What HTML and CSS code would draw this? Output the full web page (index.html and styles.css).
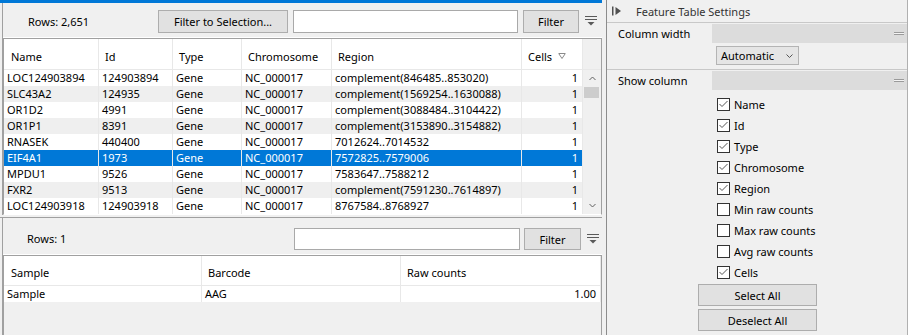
FILE: index.html
```html
<!DOCTYPE html>
<html lang="en">
<head>
    <meta charset="UTF-8">
    <title>Feature Table</title>
    <link rel="stylesheet" href="styles.css">
</head>
<body>
    <div class="app">
        <div class="tables">
            <!-- Feature table -->
            <div class="pane pane-main">
                <div class="pane-body">
                    <div class="toolbar toolbar-main">
                        <div class="rows-label">Rows: 2,651</div>
                        <button class="btn btn-selection">Filter to Selection...</button>
                        <input class="filter-input" type="text">
                        <button class="btn btn-filter">Filter</button>
                        <svg class="filter-menu" width="12" height="11" viewBox="0 0 12 11">
                            <path d="M0 0.5H12M0 3.5H12" stroke="#5a5a5a" stroke-width="1" fill="none"/>
                            <path d="M2.5 6H9.5L6 9.5Z" fill="#5a5a5a"/>
                        </svg>
                    </div>
                    <div class="grid features">
                        <div class="row head">
                            <div class="cell first">Name</div>
                            <div class="cell">Id</div>
                            <div class="cell">Type</div>
                            <div class="cell">Chromosome</div>
                            <div class="cell">Region</div>
                            <div class="cell">Cells
                                <svg class="sort-mark" width="8" height="7" viewBox="0 0 8 7">
                                    <path d="M0.5 0.5H7.5M1 1L4 5.5L7 1" stroke="#8a8a8a" stroke-width="1" fill="none"/>
                                </svg>
                            </div>
                            <div class="cell corner"></div>
                        </div>
                        <div class="vscroll">
                            <div class="arrow">
                                <svg width="7" height="5" viewBox="0 0 7 5"><path d="M0.5 4L3.5 1L6.5 4" stroke="#606060" fill="none"/></svg>
                            </div>
                            <div class="thumb"></div>
                            <div class="track"></div>
                            <div class="arrow">
                                <svg width="7" height="5" viewBox="0 0 7 5"><path d="M0.5 1L3.5 4L6.5 1" stroke="#606060" fill="none"/></svg>
                            </div>
                        </div>
                        <div class="row">
                            <div class="cell">LOC124903894</div><div class="cell">124903894</div><div class="cell">Gene</div>
                            <div class="cell">NC_000017</div><div class="cell">complement(846485..853020)</div><div class="cell num">1</div>
                        </div>
                        <div class="row alt">
                            <div class="cell">SLC43A2</div><div class="cell">124935</div><div class="cell">Gene</div>
                            <div class="cell">NC_000017</div><div class="cell">complement(1569254..1630088)</div><div class="cell num">1</div>
                        </div>
                        <div class="row">
                            <div class="cell">OR1D2</div><div class="cell">4991</div><div class="cell">Gene</div>
                            <div class="cell">NC_000017</div><div class="cell">complement(3088484..3104422)</div><div class="cell num">1</div>
                        </div>
                        <div class="row alt">
                            <div class="cell">OR1P1</div><div class="cell">8391</div><div class="cell">Gene</div>
                            <div class="cell">NC_000017</div><div class="cell">complement(3153890..3154882)</div><div class="cell num">1</div>
                        </div>
                        <div class="row">
                            <div class="cell">RNASEK</div><div class="cell">440400</div><div class="cell">Gene</div>
                            <div class="cell">NC_000017</div><div class="cell">7012624..7014532</div><div class="cell num">1</div>
                        </div>
                        <div class="row selected">
                            <div class="cell">EIF4A1</div><div class="cell">1973</div><div class="cell">Gene</div>
                            <div class="cell">NC_000017</div><div class="cell">7572825..7579006</div><div class="cell num">1</div>
                        </div>
                        <div class="row">
                            <div class="cell">MPDU1</div><div class="cell">9526</div><div class="cell">Gene</div>
                            <div class="cell">NC_000017</div><div class="cell">7583647..7588212</div><div class="cell num">1</div>
                        </div>
                        <div class="row alt">
                            <div class="cell">FXR2</div><div class="cell">9513</div><div class="cell">Gene</div>
                            <div class="cell">NC_000017</div><div class="cell">complement(7591230..7614897)</div><div class="cell num">1</div>
                        </div>
                        <div class="row">
                            <div class="cell">LOC124903918</div><div class="cell">124903918</div><div class="cell">Gene</div>
                            <div class="cell">NC_000017</div><div class="cell">8767584..8768927</div><div class="cell num">1</div>
                        </div>
                    </div>
                </div>
            </div>

            <div class="splitter"></div>

            <!-- Sample table -->
            <div class="pane pane-detail">
                <div class="pane-body">
                    <div class="toolbar toolbar-detail">
                        <div class="rows-label">Rows: 1</div>
                        <input class="filter-input" type="text">
                        <button class="btn btn-filter">Filter</button>
                        <svg class="filter-menu" width="12" height="11" viewBox="0 0 12 11">
                            <path d="M0 0.5H12M0 3.5H12" stroke="#5a5a5a" stroke-width="1" fill="none"/>
                            <path d="M2.5 6H9.5L6 9.5Z" fill="#5a5a5a"/>
                        </svg>
                    </div>
                    <div class="grid samples">
                        <div class="row head">
                            <div class="cell first">Sample</div>
                            <div class="cell">Barcode</div>
                            <div class="cell">Raw counts</div>
                        </div>
                        <div class="row">
                            <div class="cell">Sample</div>
                            <div class="cell">AAG</div>
                            <div class="cell num">1.00</div>
                        </div>
                    </div>
                </div>
            </div>
        </div>

        <!-- Settings side panel -->
        <div class="settings">
            <div class="settings-title">
                <svg class="collapse-icon" width="10" height="10" viewBox="0 0 10 10">
                    <rect x="0" y="0.5" width="1.5" height="9" fill="#505050"/>
                    <path d="M3.5 1L9 5L3.5 9Z" fill="#505050"/>
                </svg>
                <span>Feature Table Settings</span>
            </div>

            <div class="section">
                <div class="section-head">
                    <div class="section-label">Column width</div>
                    <div class="section-bar"><div class="grip"></div></div>
                </div>
                <div class="section-body width-body">
                    <div class="select">
                        <span>Automatic</span>
                        <svg width="7" height="4" viewBox="0 0 7 4"><path d="M0.5 0.5L3.5 3.5L6.5 0.5" stroke="#555" fill="none"/></svg>
                    </div>
                </div>
            </div>

            <div class="section">
                <div class="section-head">
                    <div class="section-label">Show column</div>
                    <div class="section-bar"><div class="grip"></div></div>
                </div>
                <div class="section-body columns-body">
                    <div class="check-list">
                        <label class="check"><span class="box on"></span>Name</label>
                        <label class="check"><span class="box on"></span>Id</label>
                        <label class="check"><span class="box on"></span>Type</label>
                        <label class="check"><span class="box on"></span>Chromosome</label>
                        <label class="check"><span class="box on"></span>Region</label>
                        <label class="check"><span class="box"></span>Min raw counts</label>
                        <label class="check"><span class="box"></span>Max raw counts</label>
                        <label class="check"><span class="box"></span>Avg raw counts</label>
                        <label class="check"><span class="box on"></span>Cells</label>
                    </div>
                    <button class="btn btn-wide">Select All</button>
                    <button class="btn btn-wide">Deselect All</button>
                </div>
            </div>
        </div>
    </div>
</body>
</html>
```

FILE: styles.css
```css
body {
    margin: 0;
    font-family: 'Noto Sans', 'Open Sans', sans-serif;
    font-size: 11px;
    color: #000;
    background: #f0f0f0;
}

.app {
    display: flex;
    height: 335px;
    overflow: hidden;
}

.tables {
    width: 602px;
    display: flex;
    flex-direction: column;
}

.pane {
    display: flex;
    flex-direction: column;
}

.pane-main {
    border-top: 3px solid #0078d7;
}

.pane-detail {
    flex: 1;
    border-top: 1px solid #a0a0a0;
    min-height: 0;
}

.pane-body {
    margin-left: 2px;
    border-left: 1px solid #a0a0a0;
    display: flex;
    flex-direction: column;
    flex: 1;
    min-height: 0;
}

.splitter {
    height: 2px;
}

/* Toolbars */

.toolbar {
    display: flex;
    align-items: center;
    border-bottom: 1px solid #fff;
}

.toolbar-main {
    height: 35px;
    box-sizing: border-box;
    padding: 7px 0 4px 25px;
}

.toolbar-detail {
    height: 37px;
    box-sizing: border-box;
    padding: 10px 0 4px 24px;
}

.rows-label {
    line-height: 16px;
    white-space: nowrap;
}

.toolbar-main .rows-label { width: 130px; }
.toolbar-detail .rows-label { width: 267px; }

.btn {
    font-family: inherit;
    font-size: 11px;
    color: #000;
    background: #e1e1e1;
    border: 1px solid #adadad;
    padding: 0;
    margin: 0;
    box-sizing: border-box;
}

.btn-selection {
    width: 130px;
    height: 23px;
}

.filter-input {
    box-sizing: border-box;
    background: #fff;
    border: 1px solid #a9a9a9;
    padding: 0;
    margin: 0;
    outline: none;
}

.toolbar-main .filter-input {
    width: 225px;
    height: 23px;
    margin-left: 5px;
}

.toolbar-detail .filter-input {
    width: 226px;
    height: 22px;
}

.toolbar-main .btn-filter {
    width: 56px;
    height: 23px;
    margin-left: 5px;
}

.toolbar-detail .btn-filter {
    width: 57px;
    height: 22px;
    margin-left: 4px;
}

.filter-menu {
    margin-left: 6px;
    flex-shrink: 0;
}

/* Tables */

.grid {
    display: grid;
    border: 1px solid #a0a0a0;
    border-bottom-color: #fff;
    border-right-color: #a0a0a0;
}

.features {
    grid-template-columns: 95px 74px 69px 90px 190px 61px 18px;
    background: #fff;
}

.samples {
    grid-template-columns: 198px 199px 200px;
    align-content: start;
    flex: 1;
    border-bottom: 0;
}

.row {
    display: contents;
}

.cell {
    height: 16px;
    line-height: 16px;
    padding: 0 3px;
    border-right: 1px solid #e8e8e8;
    box-sizing: border-box;
    white-space: nowrap;
    overflow: hidden;
    background: #fff;
}

.cell.num {
    text-align: right;
    padding-right: 4px;
}

.row.alt .cell {
    background: #efefef;
}

.row.selected .cell {
    background: #0078d7;
    color: #fff;
}

.head .cell {
    height: 31px;
    padding: 10px 6px 4px;
    border-bottom: 1px solid #e8e8e8;
}

.samples .head .cell {
    height: 30px;
    padding-top: 9px;
}

.head .cell.first {
    padding-left: 7px;
}

.head .cell.corner {
    background: #f0f0f0;
    border-right: 0;
}

.sort-mark {
    margin-left: 3px;
    vertical-align: 1px;
}

.vscroll {
    grid-column: 7;
    grid-row: 2 / span 9;
    background: #f0f0f0;
    display: flex;
    flex-direction: column;
}

.vscroll .arrow {
    height: 17px;
    display: flex;
    align-items: center;
    justify-content: center;
}

.vscroll .thumb {
    height: 11px;
    margin: 0 2px 0 1px;
    background: #cdcdcd;
}

.vscroll .track {
    flex: 1;
}

/* Settings panel */

.settings {
    flex: 1;
    margin-left: 4px;
    border-left: 1px solid #8c8c8c;
    border-right: 1px solid #b0b0b0;
    background: #f0f0f0;
}

.settings-title {
    height: 22px;
    display: flex;
    align-items: center;
    padding-left: 5px;
    color: #333;
}

.collapse-icon {
    margin-right: 14px;
}

.section {
    border-top: 1px solid #c8c8c8;
}

.section-head {
    display: flex;
    height: 19px;
    margin-top: 1px;
}

.section-label {
    width: 105px;
    box-sizing: border-box;
    padding-left: 11px;
    line-height: 19px;
}

.section-bar {
    flex: 1;
    background: #dcdcdc;
    display: flex;
    justify-content: flex-end;
    align-items: center;
    padding-right: 3px;
}

.grip {
    width: 10px;
    height: 1px;
    border-top: 1px solid #9a9a9a;
    border-bottom: 1px solid #9a9a9a;
    background: #f4f4f4;
}

.width-body {
    padding: 3px 0 4px 109px;
}

.select {
    width: 83px;
    height: 19px;
    box-sizing: border-box;
    border: 1px solid #b4b4b4;
    background: #e5e5e5;
    display: flex;
    align-items: center;
    justify-content: space-between;
    padding: 0 5px 0 4px;
}

.columns-body {
    padding-top: 4px;
}

.check-list {
    display: flex;
    flex-direction: column;
    padding-left: 110px;
}

.check {
    height: 21px;
    display: flex;
    align-items: center;
}

.box {
    width: 13px;
    height: 13px;
    box-sizing: border-box;
    border: 1px solid #333;
    background: #fff;
    margin-right: 4px;
}

.box.on {
    background: #fff url("data:image/svg+xml;utf8,<svg xmlns='http://www.w3.org/2000/svg' width='11' height='11' viewBox='0 0 11 11'><path d='M1.5 5L4 7.5L9.5 2' stroke='%23555' stroke-width='1' fill='none'/></svg>") no-repeat center;
}

.btn-wide {
    display: block;
    width: 119px;
    height: 22px;
    margin: 1px 0 0 91px;
}

.btn-wide + .btn-wide {
    margin-top: 3px;
}
```
